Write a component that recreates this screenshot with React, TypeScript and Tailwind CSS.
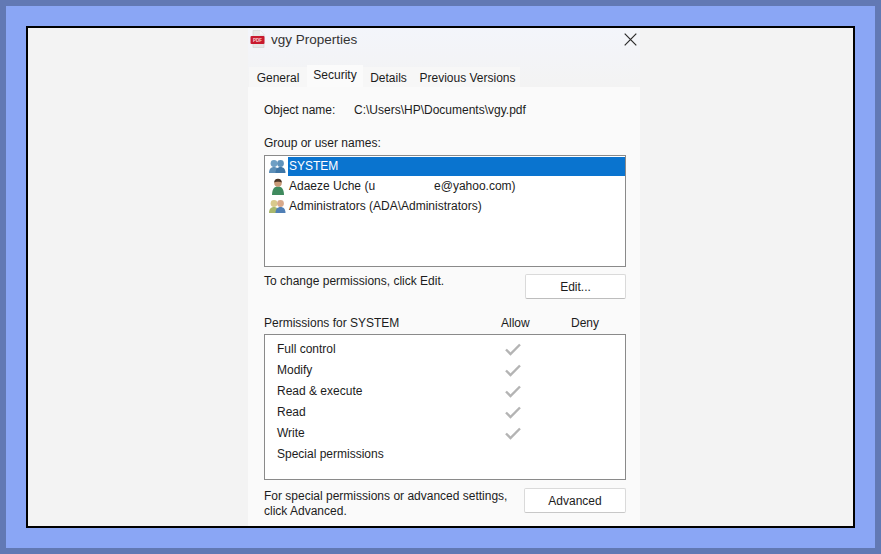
const font = { fontFamily: '"Liberation Sans", Arial, sans-serif' };

function PdfIcon() {
  return (
    <svg width="16" height="18" viewBox="0 0 16 18" className="shrink-0">
      <path d="M3 0.500h7l4 4v13H3z" fill="#e6e6e6" stroke="#d2d2d2" strokeWidth="0.600" />
      <path d="M10 0.500v4h4z" fill="#f8f8f8" />
      <rect x="0.500" y="6" width="14" height="8" rx="1" fill="#c8192e" />
      <text x="7.500" y="11.700" textAnchor="middle" fontSize="4.500" fontWeight="700" fill="#fbd5d8">PDF</text>
    </svg>
  );
}

function Person({ x, body, head }: { x: number; body: string; head: string }) {
  return (
    <g transform={`translate(${x} 0)`}>
      <path d="M0 14c0-4 2-6 5-6s5 2 5 6z" fill={body} />
      <circle cx="5" cy="4.500" r="3.400" fill={head} />
    </g>
  );
}

function GroupIcon({ admin }: { admin?: boolean }) {
  return (
    <svg width="17" height="15" viewBox="0 0 17 15" className="shrink-0">
      <Person x={0} body={admin ? "#a9b86c" : "#5d8fb8"} head={admin ? "#d9c98c" : "#6f9fc4"} />
      <Person x={6.500} body={admin ? "#4f7fb5" : "#3f76a6"} head={admin ? "#d8a98a" : "#5f92bb"} />
    </svg>
  );
}

function UserIcon() {
  return (
    <svg width="14" height="17" viewBox="0 0 14 17" className="shrink-0">
      <path d="M1 17c0-6 2.400-8.500 6-8.500S13 11 13 17z" fill="#3f8a5e" />
      <circle cx="7" cy="5" r="3.800" fill="#c99a78" />
      <path d="M3.200 4.600A3.800 3.800 0 0 1 10.800 4.600C9 3.600 5 3.600 3.200 4.600z" fill="#4a3526" />
    </svg>
  );
}

function Check() {
  return (
    <svg width="18" height="14" viewBox="0 0 18 14" className="mb-[2px] shrink-0">
      <path d="M2 7.500 L6.500 12 L16 2.500" fill="none" stroke="#b4b4b4" strokeWidth="2.400" />
    </svg>
  );
}

function XIcon() {
  return (
    <svg width="13" height="13" viewBox="0 0 13 13">
      <path d="M0.700 0.700L12.300 12.300M12.300 0.700L0.700 12.300" stroke="#2a2a2a" strokeWidth="1.200" fill="none" />
    </svg>
  );
}

const perms = [
  ["Full control", true],
  ["Modify", true],
  ["Read & execute", true],
  ["Read", true],
  ["Write", true],
  ["Special permissions", false],
] as const;

export default function App() {
  return (
    <div style={font} className="w-[881px] h-[554px] overflow-hidden border-[6px] border-[#6279b4] bg-[#8aa6f5] p-5 text-[12px] leading-[15px] text-[#1c1c1c]">
      <div className="h-[502px] w-[829px] overflow-hidden border-2 border-black bg-[#f3f3f3] pl-[220px]">
        <div className="h-[498px] w-[392px]">
          {/* Title */}
          <div className="h-[59px] w-[392px] bg-gradient-to-b from-[#f3f5fb] to-[#f3f3f3]">
            <div className="flex h-[20px] items-center pt-[2px]">
              <div className="ml-[2px] mr-[5px] flex"><PdfIcon /></div>
              <span className="text-[13.500px] text-[#333]">vgy Properties</span>
              <div className="ml-auto mr-[3px] flex"><XIcon /></div>
            </div>
            {/* Tabs */}
            <div className="mt-[17px] flex h-[22px] items-end pl-px">
              <div className="flex h-[20px] w-[58px] items-center justify-center bg-[#f7f7f7] pt-[2px]">General</div>
              <div className="flex h-[22px] w-[56px] items-start justify-center bg-[#fbfbfb] pt-[3px]">Security</div>
              <div className="flex h-[20px] w-[51px] items-center justify-center bg-[#f7f7f7] pt-[2px]">Details</div>
              <div className="flex h-[20px] w-[106px] items-center justify-center bg-[#f7f7f7] pt-[2px] pl-px">Previous Versions</div>
            </div>
          </div>
          {/* Panel */}
          <div className="h-[439px] bg-[#fafafa] pl-4 pr-[14px] pt-[16px]">
            <div className="flex">
              <span className="w-[90px]">Object name:</span>
              <span>C:\Users\HP\Documents\vgy.pdf</span>
            </div>
            <div className="mt-[18px]">Group or user names:</div>
            <div className="mt-[4px] h-[112px] border border-[#8a8a8a] bg-white pl-[4px] pt-px">
              <div className="flex h-[19px] items-center">
                <div className="flex w-[19px]"><GroupIcon /></div>
                <div className="flex h-[19px] flex-1 items-center bg-[#0a74cf] pl-px text-white">SYSTEM</div>
              </div>
              <div className="flex h-[21px] items-center">
                <div className="flex w-[19px] pl-[2px]"><UserIcon /></div>
                <span className="pl-px">Adaeze Uche (u</span>
                <span className="w-[59px]" />
                <span>e@yahoo.com)</span>
              </div>
              <div className="flex h-[19px] items-center">
                <div className="flex w-[19px]"><GroupIcon admin /></div>
                <span className="pl-px">Administrators (ADA\Administrators)</span>
              </div>
            </div>
            <div className="mt-[7px] flex items-start justify-between">
              <span>To change permissions, click Edit.</span>
              <button className="h-[25px] w-[101px] rounded-[2px] border border-[#dadada] border-b-[#bdbdbd] bg-white pt-px text-center text-[#1c1c1c]">Edit...</button>
            </div>
            <div className="mt-[17px] flex h-[15px]">
              <span className="w-[237px]">Permissions for SYSTEM</span>
              <span className="w-[70px]">Allow</span>
              <span>Deny</span>
            </div>
            <div className="mt-[3px] h-[146px] border border-[#8a8a8a] bg-white pl-[12px] pt-[4px]">
              {perms.map(([name, on]) => (
                <div key={name} className="flex h-[21px] items-center">
                  <span className="w-[227px]">{name}</span>
                  {on && <Check />}
                </div>
              ))}
            </div>
            <div className="mt-[8px] flex items-start justify-between">
              <span className="w-[250px] pt-px">For special permissions or advanced settings, click Advanced.</span>
              <button className="h-[25px] w-[102px] rounded-[2px] border border-[#dadada] border-b-[#c8c8c8] bg-white pt-px text-center text-[#1c1c1c]">Advanced</button>
            </div>
          </div>
        </div>
      </div>
    </div>
  );
}
